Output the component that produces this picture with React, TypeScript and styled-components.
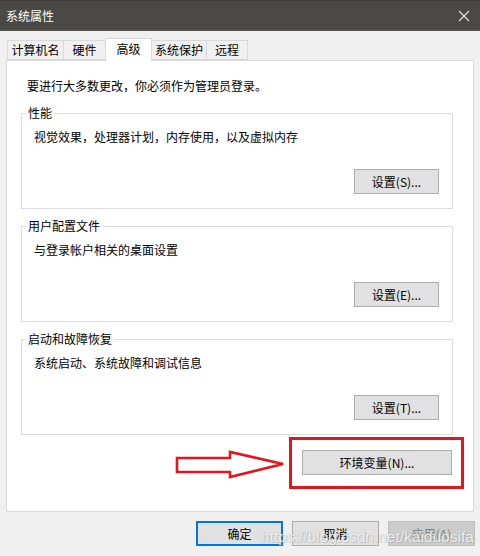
import React from "react";
import styled, { createGlobalStyle } from "styled-components";

const GlobalStyle = createGlobalStyle`
  html, body { margin: 0; padding: 0; background: #f0f0f0; }
  body {
    font-family: "Noto Sans CJK SC", "Noto Sans", "Liberation Sans", sans-serif;
    font-size: 12px;
    color: #000;
  }
  * { box-sizing: border-box; }
`;

const Window = styled.div`
  position: relative;
  width: 480px;
  height: 556px;
  background: #f0f0f0;
  overflow: hidden;
  display: flex;
  flex-direction: column;
`;

const TitleBar = styled.div`
  height: 31px;
  background: #4b4946;
  border-top: 1px solid #3e3d3a;
  border-bottom: 1px solid #5a5955;
  display: flex;
  align-items: center;
  justify-content: space-between;
  padding: 0 8px 0 6px;
  color: #ffffff;
  font-size: 12px;
  line-height: 16px;
`;

const CloseButton = styled.div`
  width: 16px;
  height: 16px;
  display: flex;
  align-items: center;
  justify-content: center;
`;

const TabBar = styled.div`
  display: flex;
  align-items: flex-end;
  padding: 7px 0 0 7px;
  height: 29px;
  position: relative;
  z-index: 1;
`;

const Tab = styled.div<{ $w: number; $active?: boolean }>`
  width: ${(p) => p.$w}px;
  height: ${(p) => (p.$active ? 23 : 20)}px;
  margin-bottom: ${(p) => (p.$active ? -1 : 0)}px;
  background: ${(p) => (p.$active ? "#ffffff" : "#f0f0f0")};
  border: 1px solid #d9d9d9;
  border-bottom: ${(p) => (p.$active ? "none" : "1px solid #d9d9d9")};
  margin-left: -1px;
  display: flex;
  align-items: ${(p) => (p.$active ? "flex-start" : "center")};
  padding-top: ${(p) => (p.$active ? 2 : 0)}px;
  justify-content: center;
  font-size: 12px;
  line-height: 16px;
  white-space: nowrap;
  &:first-child { margin-left: 0; }
`;

const Panel = styled.div`
  margin: 0 6px 0 6px;
  height: 452px;
  background: #ffffff;
  border: 1px solid #d9d9d9;
  padding: 17px 20px 0 14px;
  display: flex;
  flex-direction: column;
`;

const Intro = styled.div`
  line-height: 16px;
  padding-left: 6px;
  margin-bottom: 11px;
  white-space: nowrap;
`;

const Group = styled.fieldset`
  margin: 0 0 9px 0;
  padding: 0;
  border: 1px solid #dcdcdc;
  height: 104px;
  min-width: 0;
`;

const Legend = styled.legend`
  margin-left: 4px;
  padding: 0 2px;
  line-height: 16px;
  font-size: 12px;
  white-space: nowrap;
`;

const GroupBody = styled.div`
  display: flex;
  flex-direction: column;
  padding: 8px 13px 0 12px;
`;

const Desc = styled.div`
  line-height: 16px;
  white-space: nowrap;
`;

const ButtonRow = styled.div<{ $mt?: number }>`
  display: flex;
  justify-content: flex-end;
  margin-top: ${(p) => p.$mt ?? 24}px;
`;

const Button = styled.div<{ $w?: number; $h?: number; $variant?: "default" | "primary" | "disabled" }>`
  width: ${(p) => p.$w ?? 85}px;
  height: ${(p) => p.$h ?? 25}px;
  background: ${(p) => (p.$variant === "disabled" ? "#cccccc" : "#e1e1e1")};
  border: ${(p) =>
    p.$variant === "primary"
      ? "2px solid #0078d7"
      : p.$variant === "disabled"
      ? "1px solid #bfbfbf"
      : "1px solid #adadad"};
  color: ${(p) => (p.$variant === "disabled" ? "#838383" : "#000")};
  display: flex;
  align-items: center;
  justify-content: center;
  font-size: 12px;
  line-height: 16px;
  white-space: nowrap;
`;

const EnvRow = styled.div`
  display: flex;
  justify-content: flex-end;
  margin-top: 6px;
  padding-right: 1px;
`;

const Footer = styled.div`
  display: flex;
  justify-content: flex-end;
  gap: 9px;
  padding: 9px 5px 0 0;
`;

const RedBox = styled.div`
  position: absolute;
  left: 289px;
  top: 437px;
  width: 175px;
  height: 52px;
  border: 3px solid #e8141c;
  pointer-events: none;
`;

const Arrow = styled.svg`
  position: absolute;
  left: 174px;
  top: 449px;
  pointer-events: none;
`;

const Watermark = styled.div`
  position: absolute;
  left: 261px;
  top: 527px;
  font-family: "Liberation Sans", Arial, sans-serif;
  font-size: 15.5px;
  line-height: 20px;
  color: rgba(255, 255, 255, 0.85);
  text-shadow: 0 0 1px rgba(120, 120, 120, 0.55), 1px 1px 0 rgba(150, 150, 150, 0.35);
  white-space: nowrap;
  pointer-events: none;
`;

const groups = [
  { title: "性能", desc: "视觉效果，处理器计划，内存使用，以及虚拟内存", btn: "设置(S)..." },
  { title: "用户配置文件", desc: "与登录帐户相关的桌面设置", btn: "设置(E)..." },
  { title: "启动和故障恢复", desc: "系统启动、系统故障和调试信息", btn: "设置(T)..." },
];

const tabs = [
  { label: "计算机名", w: 57 },
  { label: "硬件", w: 43 },
  { label: "高级", w: 47, active: true },
  { label: "系统保护", w: 56 },
  { label: "远程", w: 42 },
];

export default function App() {
  return (
    <>
      <GlobalStyle />
      <Window>
        <TitleBar>
          <span>系统属性</span>
          <CloseButton>
            <svg width="12" height="12" viewBox="0 0 12 12">
              <path d="M1 1 L11 11 M11 1 L1 11" stroke="#e8e8e8" strokeWidth="1.1" />
            </svg>
          </CloseButton>
        </TitleBar>
        <TabBar>
          {tabs.map((t) => (
            <Tab key={t.label} $w={t.w} $active={t.active}>
              {t.label}
            </Tab>
          ))}
        </TabBar>
        <Panel>
          <Intro>要进行大多数更改，你必须作为管理员登录。</Intro>
          {groups.map((g) => (
            <Group key={g.title}>
              <Legend>{g.title}</Legend>
              <GroupBody>
                <Desc>{g.desc}</Desc>
                <ButtonRow>
                  <Button>{g.btn}</Button>
                </ButtonRow>
              </GroupBody>
            </Group>
          ))}
          <EnvRow>
            <Button $w={150}>环境变量(N)...</Button>
          </EnvRow>
        </Panel>
        <Footer>
          <Button $w={87} $variant="primary">确定</Button>
          <Button $w={87}>取消</Button>
          <Button $w={87} $variant="disabled">应用(A)</Button>
        </Footer>
        <RedBox />
        <Arrow width="114" height="32" viewBox="0 0 114 32">
          <path
            d="M3 9 L56 9 L56 3 L109 15 L56 28 L56 23 L3 23 Z"
            fill="#ffffff"
            stroke="#e8141c"
            strokeWidth="2.6"
            strokeLinejoin="miter"
          />
        </Arrow>
        <Watermark>https://blog.csdn.net/kaiduosifa</Watermark>
      </Window>
    </>
  );
}
